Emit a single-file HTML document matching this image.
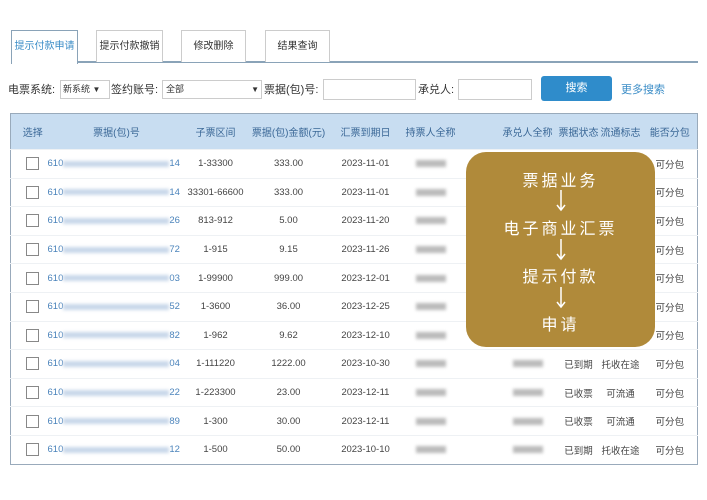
<!DOCTYPE html>
<html><head><meta charset="utf-8"><style>
*{margin:0;padding:0;box-sizing:border-box}
body{width:707px;height:500px;background:#fff;position:relative;overflow:hidden;font-family:"Liberation Sans","Noto Sans CJK SC",sans-serif;font-size:10px;color:#333}
.a{position:absolute}
.tab{position:absolute;top:30px;height:32px;border:1px solid #ccc;border-bottom:none;background:#fff;font-size:10px;text-align:center;line-height:31px;color:#333}
.inp{position:absolute;border:1px solid #ccc;background:#fff;height:19px}
table{position:absolute;left:10px;top:113px;width:688px;border:1px solid #9ab;border-collapse:collapse;table-layout:fixed}
th{background:#c8ddf1;color:#3b6897;font-weight:normal;height:36px;font-size:10px;white-space:nowrap;overflow:hidden}
td{height:28.6px;text-align:center;font-size:9.5px;color:#444;border-top:1px solid #eef1f4;white-space:nowrap;overflow:hidden}
.c1{padding-left:7px}
.cb{display:inline-block;width:13px;height:13px;border:1px solid #888;vertical-align:middle}
.blur{display:inline-block;height:6px;background:#c9d8ea;vertical-align:middle;filter:blur(1.5px)}
.g{display:inline-block;height:7px;width:30px;background:#bbb;vertical-align:middle;filter:blur(1.5px)}
.n{text-align:left;color:#4a83bb}
.ov{position:absolute;left:466px;top:152px;width:189px;height:195px;border-radius:20px;background:#b08a3a;color:#fff;text-align:center;font-size:16px;letter-spacing:3px}
.ov div{position:absolute;left:0;width:100%}
.ov svg{position:absolute;left:90px}
</style></head><body>
<div class="a" style="left:78px;top:61px;width:620px;height:2px;background:#8aa3b8"></div>
<div class="tab" style="left:11px;width:67px;height:34px;color:#3b8dc7;border-color:#8aa3b8">提示付款申请</div>
<div class="tab" style="left:96px;width:67px">提示付款撤销</div>
<div class="tab" style="left:181px;width:65px">修改删除</div>
<div class="tab" style="left:265px;width:65px">结果查询</div>

<div class="a" style="left:8px;top:81px;font-size:11px">电票系统:</div>
<div class="inp" style="left:60px;top:80px;width:50px;font-size:9px;line-height:17px;padding-left:2px">新系统 <span style="font-size:8px">▼</span></div>
<div class="a" style="left:111px;top:81px;font-size:11px">签约账号:</div>
<div class="inp" style="left:162px;top:80px;width:100px;font-size:9px;line-height:17px;padding-left:3px">全部<span style="position:absolute;right:2px;font-size:8px">▼</span></div>
<div class="a" style="left:264px;top:81px;font-size:11px">票据(包)号:</div>
<div class="inp" style="left:323px;top:79px;width:93px;height:21px"></div>
<div class="a" style="left:418px;top:81px;font-size:11px">承兑人:</div>
<div class="inp" style="left:458px;top:79px;width:74px;height:21px"></div>
<div class="a" style="left:541px;top:76px;width:71px;height:25px;background:#2f8ccb;border-radius:3px;color:#fff;text-align:center;line-height:25px;font-size:11px">搜索</div>
<div class="a" style="left:621px;top:81px;font-size:11px;color:#3b8dc7">更多搜索</div>

<table>
<colgroup><col style="width:37px"><col style="width:138px"><col style="width:60px"><col style="width:86px"><col style="width:68px"><col style="width:62px"><col style="width:97px"><col style="width:40px"><col style="width:44px"><col></colgroup>
<tr><th class="c1">选择</th><th>票据(包)号</th><th>子票区间</th><th>票据(包)金额(元)</th><th>汇票到期日</th><th>持票人全称</th><th style="text-align:right;padding-right:6px">承兑人全称</th><th>票据状态</th><th>流通标志</th><th>能否分包</th></tr>
<tr><td class="c1"><span class="cb"></span></td><td class="n">610<span class="blur" style="width:106px"></span>14</td><td>1-33300</td><td>333.00</td><td>2023-11-01</td><td><span class="g"></span></td><td></td><td></td><td></td><td>可分包</td></tr>
<tr><td class="c1"><span class="cb"></span></td><td class="n">610<span class="blur" style="width:106px"></span>14</td><td>33301-66600</td><td>333.00</td><td>2023-11-01</td><td><span class="g"></span></td><td></td><td></td><td></td><td>可分包</td></tr>
<tr><td class="c1"><span class="cb"></span></td><td class="n">610<span class="blur" style="width:106px"></span>26</td><td>813-912</td><td>5.00</td><td>2023-11-20</td><td><span class="g"></span></td><td></td><td></td><td></td><td>可分包</td></tr>
<tr><td class="c1"><span class="cb"></span></td><td class="n">610<span class="blur" style="width:106px"></span>72</td><td>1-915</td><td>9.15</td><td>2023-11-26</td><td><span class="g"></span></td><td></td><td></td><td></td><td>可分包</td></tr>
<tr><td class="c1"><span class="cb"></span></td><td class="n">610<span class="blur" style="width:106px"></span>03</td><td>1-99900</td><td>999.00</td><td>2023-12-01</td><td><span class="g"></span></td><td></td><td></td><td></td><td>可分包</td></tr>
<tr><td class="c1"><span class="cb"></span></td><td class="n">610<span class="blur" style="width:106px"></span>52</td><td>1-3600</td><td>36.00</td><td>2023-12-25</td><td><span class="g"></span></td><td></td><td></td><td></td><td>可分包</td></tr>
<tr><td class="c1"><span class="cb"></span></td><td class="n">610<span class="blur" style="width:106px"></span>82</td><td>1-962</td><td>9.62</td><td>2023-12-10</td><td><span class="g"></span></td><td></td><td></td><td></td><td>可分包</td></tr>
<tr><td class="c1"><span class="cb"></span></td><td class="n">610<span class="blur" style="width:106px"></span>04</td><td>1-111220</td><td>1222.00</td><td>2023-10-30</td><td><span class="g"></span></td><td style="text-align:right;padding-right:16px"><span class="g"></span></td><td>已到期</td><td>托收在途</td><td>可分包</td></tr>
<tr><td class="c1"><span class="cb"></span></td><td class="n">610<span class="blur" style="width:106px"></span>22</td><td>1-223300</td><td>23.00</td><td>2023-12-11</td><td><span class="g"></span></td><td style="text-align:right;padding-right:16px"><span class="g"></span></td><td>已收票</td><td>可流通</td><td>可分包</td></tr>
<tr><td class="c1"><span class="cb"></span></td><td class="n">610<span class="blur" style="width:106px"></span>89</td><td>1-300</td><td>30.00</td><td>2023-12-11</td><td><span class="g"></span></td><td style="text-align:right;padding-right:16px"><span class="g"></span></td><td>已收票</td><td>可流通</td><td>可分包</td></tr>
<tr><td class="c1"><span class="cb"></span></td><td class="n">610<span class="blur" style="width:106px"></span>12</td><td>1-500</td><td>50.00</td><td>2023-10-10</td><td><span class="g"></span></td><td style="text-align:right;padding-right:16px"><span class="g"></span></td><td>已到期</td><td>托收在途</td><td>可分包</td></tr>
</table>

<div class="ov">
<div style="top:15px">票据业务</div>
<svg style="top:38px" width="10" height="22"><path d="M5 0V20M1 15L5 20L9 15" stroke="#fff" stroke-width="1.5" fill="none"/></svg>
<div style="top:63px">电子商业汇票</div>
<svg style="top:87px" width="10" height="22"><path d="M5 0V20M1 15L5 20L9 15" stroke="#fff" stroke-width="1.5" fill="none"/></svg>
<div style="top:111px">提示付款</div>
<svg style="top:135px" width="10" height="22"><path d="M5 0V20M1 15L5 20L9 15" stroke="#fff" stroke-width="1.5" fill="none"/></svg>
<div style="top:159px">申请</div>
</div>
</body></html>
